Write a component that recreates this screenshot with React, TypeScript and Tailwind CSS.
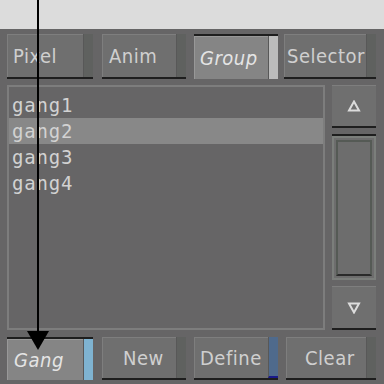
import React from 'react';

type BtnProps = {
  label: string;
  width: string;
  pad: string;
  pressed?: boolean;
  strip?: string;
  italic?: boolean;
};

const Btn: React.FC<BtnProps> = ({ label, width, pad, pressed, strip, italic }) => {
  return (
    <div
      className={`${width} flex h-full ${
        pressed ? 'border-t-2 border-t-[#1e1e1e] bg-[#858585]' : 'border-b-2 border-b-[#1e1e1e] bg-[#6f6f6f]'
      }`}
    >
      <div
        className={`flex flex-1 items-center ${pad} border-t border-l ${
          pressed ? 'border-[#989898]' : 'border-[#7e7e7e]'
        }`}
      >
        <span
          className={`text-[20px] tracking-[0.5px] ${italic ? 'italic text-[#e4e4e4]' : 'text-[#cfcfcf]'}`}
          style={{ fontFamily: '"DejaVu Sans Condensed", "DejaVu Sans", sans-serif' }}
        >
          {label}
        </span>
      </div>
      <div className={`w-[10px] border-l border-[#585858] ${strip ?? 'bg-[#5f615f]'}`} />
    </div>
  );
};

const items = ['gang1', 'gang2', 'gang3', 'gang4'];

export default function App() {
  return (
    <div className="relative w-[384px] h-[384px] overflow-hidden bg-[#666566]">
      <div className="h-[29px] bg-[#dcdcdc]" />

      {/* top tabs */}
      <div className="flex h-[45px] mt-[5px] pl-[7px]">
        <Btn label="Pixel" width="w-[86px]" pad="pl-[5px]" />
        <div className="ml-[9px]">
          <Btn label="Anim" width="w-[84px]" pad="pl-[6px]" />
        </div>
        <div className="ml-[8px]">
          <Btn label="Group" width="w-[84px]" pad="pl-[5px]" pressed italic strip="bg-[#bcbcbc]" />
        </div>
        <div className="ml-[6px]">
          <Btn label="Selector" width="w-[92px]" pad="pl-[2px]" />
        </div>
      </div>

      {/* list + scrollbar */}
      <div className="flex h-[247px] mt-[6px] pl-[7px]">
        <div className="w-[318px] h-[245px] border-2 border-[#7d7d7d] pt-[5px]">
          {items.map((it, i) => (
            <div
              key={it}
              className={`h-[26px] flex items-center pl-[3px] ${i === 1 ? 'bg-[#888888]' : ''}`}
            >
              <span
                className="text-[19px] tracking-[0.8px] text-[#d2d2d2]"
                style={{ fontFamily: '"DejaVu Sans Mono", monospace' }}
              >
                {it}
              </span>
            </div>
          ))}
        </div>
        <div className="ml-[7px] w-[44px] flex flex-col">
          <div className="h-[43px] bg-[#6f6f6f] border-t border-[#7e7e7e] border-b-2 border-b-[#1e1e1e] flex items-center justify-center">
            <svg width="14" height="12" viewBox="0 0 14 12">
              <polygon points="7,1.5 12,10.5 2,10.5" fill="none" stroke="#dcdcdc" strokeWidth="2" />
            </svg>
          </div>
          <div className="mt-[6px] h-[2px] bg-[#1e1e1e]" />
          <div className="h-[144px] bg-[#6d6d6d] border-2 border-[#7b7e7b] p-[2px]">
            <div className="h-full border-2 border-[#555a55] border-b-[#2a2a2a]" />
          </div>
          <div className="mt-[6px] h-[44px] bg-[#6f6f6f] border-t border-[#7e7e7e] border-b-2 border-b-[#1e1e1e] flex items-center justify-center">
            <svg width="14" height="12" viewBox="0 0 14 12">
              <polygon points="2,1.5 12,1.5 7,10.5" fill="none" stroke="#dcdcdc" strokeWidth="2" />
            </svg>
          </div>
        </div>
      </div>

      {/* bottom buttons */}
      <div className="flex h-[43px] mt-[5px] pl-[7px]">
        <Btn label="Gang" width="w-[86px]" pad="pl-[6px]" pressed italic strip="bg-[#7fb3d1]" />
        <div className="ml-[9px]">
          <Btn label="New" width="w-[84px]" pad="pl-[20px]" />
        </div>
        <div className="ml-[8px]">
          <Btn label="Define" width="w-[84px]" pad="pl-[5px]" strip="bg-[#4f6a8c] border-b-2 border-b-[#1a1a8a]" />
        </div>
        <div className="ml-[8px]">
          <Btn label="Clear" width="w-[90px]" pad="pl-[18px]" />
        </div>
      </div>

      {/* pointer arrow */}
      <div className="absolute left-[37px] top-0 w-[2px] h-[335px] bg-black" />
      <svg className="absolute left-[27px] top-[331px]" width="22" height="20" viewBox="0 0 22 20">
        <polygon points="0,0 22,0 11,19" fill="#000" />
      </svg>
    </div>
  );
}
